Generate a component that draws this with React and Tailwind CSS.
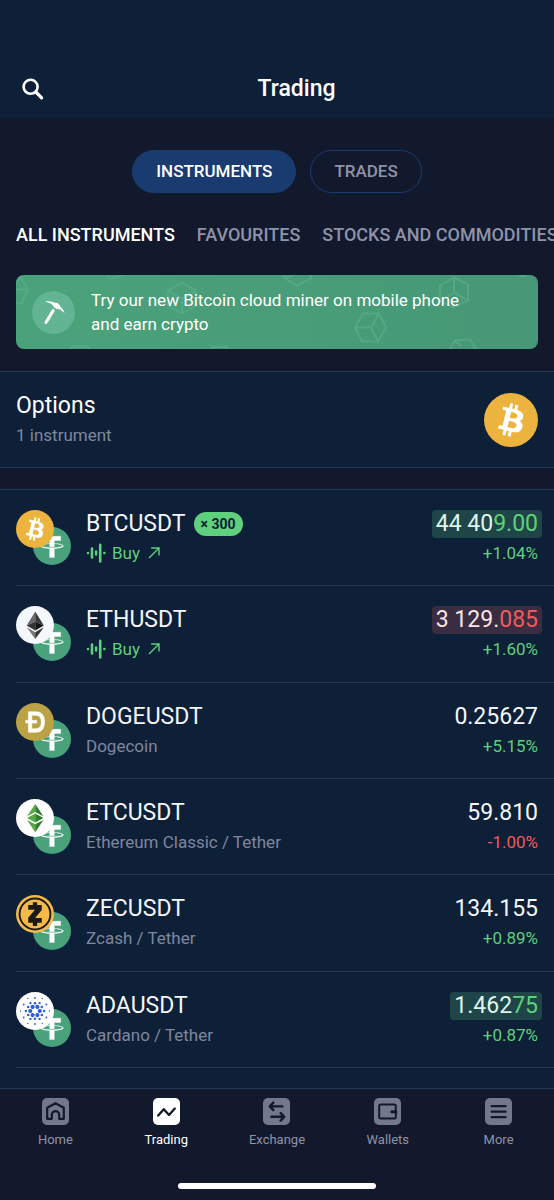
import React from "react";

const COLORS = { up: "text-[#5fd07c]", down: "text-[#ef5b5b]" };

function SearchIcon() {
  return (
    <svg viewBox="0 0 24 24" className="size-6" fill="none" stroke="currentColor" aria-hidden="true">
      <circle cx="9.6" cy="9.8" r="7" strokeWidth="2.6" />
      <path d="M14.8 15L20.6 20.8" strokeWidth="3.2" strokeLinecap="round" />
    </svg>
  );
}

function Btc({ className }) {
  return (
    <svg viewBox="0 0 32 32" className={className} aria-hidden="true">
      <circle cx="16" cy="16" r="16" fill="#ecb33e" />
      <path
        fill="#fff"
        d="M23.189 14.02c.314-2.096-1.283-3.223-3.465-3.975l.708-2.84-1.728-.43-.69 2.765c-.454-.114-.92-.22-1.385-.326l.695-2.783L15.596 6l-.708 2.839c-.376-.086-.746-.17-1.104-.26l.002-.009-2.384-.595-.46 1.846s1.283.294 1.256.312c.7.175.826.638.805 1.006l-.806 3.235c.048.012.11.03.18.057l-.183-.045-1.13 4.532c-.086.212-.303.531-.793.41.018.025-1.256-.313-1.256-.313l-.858 1.978 2.25.561c.418.105.828.215 1.231.318l-.715 2.872 1.727.43.708-2.84c.472.127.93.245 1.378.357l-.706 2.828 1.728.43.715-2.866c2.948.558 5.164.333 6.097-2.333.752-2.146-.037-3.385-1.588-4.192 1.13-.26 1.98-1.003 2.207-2.538zm-3.95 5.538c-.533 2.147-4.148.986-5.32.695l.95-3.805c1.172.293 4.929.872 4.37 3.11zm.535-5.569c-.487 1.953-3.495.96-4.47.717l.86-3.45c.975.243 4.118.696 3.61 2.733z"
      />
    </svg>
  );
}

function Eth({ className }) {
  return (
    <svg viewBox="0 0 32 32" className={className} aria-hidden="true">
      <circle cx="16" cy="16" r="16" fill="#f4f7fc" />
      <path fill="#6a6a6a" d="M16.2 4.6L9 16.5l7.2-3.2z" />
      <path fill="#3a3a3a" d="M16.2 4.6v8.700l7.200 3.200z" />
      <path fill="#333" d="M9 16.5l7.2 4.2v-7.4z" />
      <path fill="#141414" d="M23.4 16.5l-7.2 4.2v-7.4z" />
      <path fill="#777" d="M9 17.9l7.2 4.2v5.6z" />
      <path fill="#333" d="M23.4 17.9l-7.2 4.2v5.6z" />
    </svg>
  );
}

function Doge({ className }) {
  return (
    <svg viewBox="0 0 32 32" className={className} aria-hidden="true">
      <circle cx="16" cy="16" r="16" fill="#bba245" />
      <path
        fill="#fff"
        stroke="#fff"
        strokeWidth="0.5"
        d="M13.248 14.61h4.314v2.286h-4.314v4.818h2.721c1.077 0 1.958-.145 2.644-.437.686-.291 1.224-.694 1.615-1.21a4.4 4.4 0 00.796-1.815 11.4 11.4 0 00.22-2.252c0-.722-.073-1.474-.22-2.253a4.4 4.4 0 00-.796-1.815c-.391-.517-.929-.92-1.615-1.21-.686-.292-1.567-.438-2.644-.438h-2.721v4.325zm-2.766 2.286H8.2v-2.285h2.282V7.4h6.549c1.21 0 2.257.21 3.142.627.885.419 1.607.99 2.168 1.715.56.724.977 1.572 1.25 2.543.273.971.409 2.61.409 3.715a11.47 11.47 0 01-.41 3.415c-.272.97-.689 1.919-1.25 2.743-.56.725-1.282 1.396-2.168 1.815-.884.418-1.931.627-3.142.627h-6.549v-7.704z"
      />
    </svg>
  );
}

function Etc({ className }) {
  return (
    <svg viewBox="0 0 32 32" className={className} aria-hidden="true">
      <circle cx="16" cy="16" r="16" fill="#fff" />
      <path fill="#55a845" d="M16.2 4.2L9.3 14.6l6.9-3.6z" />
      <path fill="#2f7d32" d="M16.2 4.2v6.8l6.9 3.6z" />
      <path fill="#55a845" d="M9.3 16l6.9-3.7v7.5z" />
      <path fill="#2f7d32" d="M23.1 16l-6.9-3.7v7.5z" />
      <path fill="#55a845" d="M9.3 17.6l6.9 3.7v6.6z" />
      <path fill="#2f7d32" d="M23.1 17.6l-6.9 3.7v6.6z" />
    </svg>
  );
}

function Zec({ className }) {
  return (
    <svg viewBox="0 0 32 32" className={className} aria-hidden="true">
      <circle cx="16" cy="16" r="16" fill="#f4bb4b" />
      <circle cx="16" cy="16" r="13" fill="none" stroke="#1c1a17" strokeWidth="1.6" />
      <path fill="#1c1a17" d="M14.2 6h3.6v2.500h3.900v4.200l-5.600 6.700h5.600v4h-3.900V26h-3.600v-2.600h-3.900v-4.200l5.600-6.700h-5.600v-4h3.900z" />
    </svg>
  );
}

const ring = (n, r, size, offset) =>
  Array.from({ length: n }, (_, i) => {
    const a = ((offset + (360 / n) * i) * Math.PI) / 180;
    return [16 + r * Math.cos(a), 16 + r * Math.sin(a), size];
  });

const ADA_DOTS = [
  ...ring(6, 4, 1.75, 0),
  ...ring(6, 6.6, 1.05, 30),
  ...ring(6, 7.7, 1, 0),
  ...ring(6, 11, 0.8, 30),
  ...ring(6, 12.2, 0.6, 0),
];

function Ada({ className }) {
  return (
    <svg viewBox="0 0 32 32" className={className} aria-hidden="true">
      <circle cx="16" cy="16" r="16" fill="#fff" />
      {ADA_DOTS.map(([cx, cy, r], i) => (
        <circle key={i} cx={cx} cy={cy} r={r} fill="#2a5fdc" />
      ))}
    </svg>
  );
}

function Usdt({ className }) {
  return (
    <svg viewBox="0 0 32 32" className={className} aria-hidden="true">
      <circle cx="16" cy="16" r="16" fill="#4aa27c" />
      <path
        fill="#fff"
        stroke="#fff"
        strokeWidth="0.3"
        d="M17.922 17.383v-.002c-.11.008-.677.042-1.942.042-1.01 0-1.721-.03-1.971-.042v.003c-3.888-.171-6.79-.848-6.79-1.658 0-.809 2.902-1.486 6.79-1.66v2.644c.254.018.982.061 1.988.061 1.207 0 1.812-.05 1.925-.06v-2.643c3.88.173 6.775.85 6.775 1.658 0 .81-2.895 1.485-6.775 1.657m0-3.59v-2.366h5.414V7.819H8.595v3.608h5.414v2.365c-4.4.202-7.709 1.074-7.709 2.118 0 1.044 3.309 1.915 7.709 2.118v7.582h3.913v-7.584c4.393-.202 7.694-1.073 7.694-2.116 0-1.043-3.301-1.914-7.694-2.117"
      />
    </svg>
  );
}

function BannerPattern() {
  return (
    <svg
      className="absolute inset-0 size-full"
      viewBox="0 0 522 75"
      preserveAspectRatio="xMidYMid slice"
      fill="none"
      stroke="#5cb08d"
      strokeOpacity="0.6"
      strokeWidth="2"
      aria-hidden="true"
    >
      <path d="M-4 15H11M4 2L12 15L5 29H-4M-4 15L4 2" />
      <path d="M88 -4L94 4L110 0" />
      <path d="M166 8L152 16V31L166 39L180 31V16ZM166 24L152 16M166 24L180 16M166 24V39" />
      <path d="M54 76L56 72H72L74 76M193 76L196 73L210 72L212 76" />
      <path d="M267 -2L269 4L281 11L295 4V-2M281 -1L269 4" />
      <path d="M339 53L347 39H363L370 53L362 67H346ZM339 53H355M355 53L363 39M355 53L362 67" />
      <path d="M438 3L424 11V26L437 33L452 26V10ZM438 18V3M438 18L424 26M438 18L452 26" />
      <path d="M433 76L439 66L454 65L461 76M439 66L446 72" />
      <path d="M496 -2L508 2L514 -2" />
    </svg>
  );
}

function Pickaxe() {
  return (
    <svg viewBox="0 0 43 43" className="size-[43px] shrink-0" aria-hidden="true">
      <circle cx="21.5" cy="21.5" r="21.5" fill="#62b493" />
      <path
        fill="#fff"
        d="M13 10.600c3.500-.9 7.600-.2 10.600 1.500l1.300-.4 3 2.200v1.400c2.400 1.900 4.200 4.200 4.600 6.800-1.900-2.200-4.200-3.400-6.600-4.400l-1.300.4-3.300-2.400-.1-1.300c-2.500-1.800-5-3-8.200-3.800z"
      />
      <path d="M21.2 19.6L14 31.4" stroke="#fff" strokeWidth="3" strokeLinecap="round" />
    </svg>
  );
}

function SignalIcon() {
  return (
    <svg viewBox="0 0 20 20" className="size-5" fill="none" stroke="currentColor" strokeLinecap="round" aria-hidden="true">
      <path d="M2 10h.01M18.4 10h.01" strokeWidth="2.6" />
      <path d="M6 5.5v9M14.2 1.8v16.6" strokeWidth="2.6" />
      <path d="M10.1 8.400v3.200" strokeWidth="2.4" />
    </svg>
  );
}

function ArrowIcon() {
  return (
    <svg viewBox="0 0 12 12" className="size-3" fill="none" stroke="currentColor" strokeWidth="1.400" aria-hidden="true">
      <path d="M1 11L11 1M3.2 1H11V8.5" />
    </svg>
  );
}

const ROWS = [
  { symbol: "BTCUSDT", Coin: Btc, badge: "× 300", signal: true, head: "44 40", tail: "9.00", flash: "up", change: "+1.04%", dir: "up" },
  { symbol: "ETHUSDT", Coin: Eth, signal: true, head: "3 129.", tail: "085", flash: "down", change: "+1.60%", dir: "up" },
  { symbol: "DOGEUSDT", Coin: Doge, name: "Dogecoin", head: "0.25627", change: "+5.15%", dir: "up" },
  { symbol: "ETCUSDT", Coin: Etc, name: "Ethereum Classic / Tether", head: "59.810", change: "-1.00%", dir: "down" },
  { symbol: "ZECUSDT", Coin: Zec, name: "Zcash / Tether", head: "134.155", change: "+0.89%", dir: "up" },
  { symbol: "ADAUSDT", Coin: Ada, name: "Cardano / Tether", head: "1.462", tail: "75", flash: "up", change: "+0.87%", dir: "up" },
];

const FLASH = {
  up: "bg-[#1f4549] text-[#dff5ea]",
  down: "bg-[#3a2c41] text-[#fbe3e3]",
};

function Row({ symbol, Coin, badge, signal, name, head, tail, flash, change, dir }) {
  return (
    <li className="ml-4 flex flex-1 border-b border-[#26364f] pr-4">
      <div className="relative mt-5 size-[55px] shrink-0">
        <Usdt className="absolute right-0 bottom-0 size-[38px]" />
        <Coin className="absolute top-0 left-0 size-[38px]" />
      </div>
      <div className="ml-[15px] flex flex-1 flex-col pt-5">
        <div className="flex h-7 items-center gap-2">
          <span className="text-[23px] leading-7 text-[#f3f6fa]">{symbol}</span>
          {badge && <span className="rounded-full bg-[#5fd07c] px-[7px] text-sm leading-6 font-bold text-[#0e1f38]">{badge}</span>}
        </div>
        {signal ? (
          <a href="#buy" className="mt-px flex h-7 items-center text-[17px] leading-7 text-[#5fd07c]">
            <SignalIcon />
            <span className="mr-2 ml-1.5">Buy</span>
            <ArrowIcon />
          </a>
        ) : (
          <span className="mt-px text-[17px] leading-7 text-[#7f879d]">{name}</span>
        )}
      </div>
      <div className="flex flex-col items-end pt-5">
        <span className={`-mr-1 rounded px-1 text-[23px] leading-7 ${flash ? FLASH[flash] : "text-[#f3f6fa]"}`}>
          {head}
          {tail && <span className={COLORS[flash]}>{tail}</span>}
        </span>
        <span className={`mt-px text-[17px] leading-7 ${COLORS[dir]}`}>{change}</span>
      </div>
    </li>
  );
}

const NAV = [
  {
    label: "Home",
    icon: <path d="M5.2 20.8V9.8L13.5 5.2L21.8 9.8V20.8H17.2V16.8a3.7 3.7 0 0 0-7.4 0V20.8Z" strokeWidth="2.2" strokeLinejoin="round" />,
  },
  {
    label: "Trading",
    active: true,
    icon: <path d="M5.2 17.6L10.8 11.200L16 17L21.8 10.6" strokeWidth="2.3" strokeLinecap="round" strokeLinejoin="round" />,
  },
  {
    label: "Exchange",
    icon: (
      <path
        d="M19.4 8.400H7.400M10.400 4.600L6.800 8.400L10.400 12.200M8.400 18.800H20.400M17.600 15L21.200 18.800L17.600 22.600"
        strokeWidth="2.4"
        strokeLinecap="round"
        strokeLinejoin="round"
      />
    ),
  },
  {
    label: "Wallets",
    icon: (
      <>
        <rect x="5.2" y="6.6" width="16.6" height="14" rx="1.5" strokeWidth="2" />
        <path d="M17.8 13.7H21.8" strokeWidth="3" strokeLinecap="round" />
      </>
    ),
  },
  { label: "More", icon: <path d="M6.6 8.2H20.6M6.6 13.7H20.6M6.6 19.2H20.6" strokeWidth="2.2" strokeLinecap="round" /> },
];

export default function App() {
  return (
    <div className="flex min-h-screen flex-col overflow-x-hidden bg-[#12192c] font-[Roboto,sans-serif] text-white">
      <header className="flex items-center bg-[#0e1f38] pt-[75px] pr-1.5 pb-[15px] pl-[21px]">
        <button type="button" aria-label="Search">
          <SearchIcon />
        </button>
        <h1 className="flex-1 text-center text-[23px] leading-7 font-medium">Trading</h1>
      </header>

      <main className="flex flex-1 flex-col">
        <div className="flex justify-center gap-[14px] pt-8 text-[17px] font-medium">
          <button type="button" className="h-[43px] rounded-full border border-[#1a3b70] bg-[#1a3b70] px-[23px]">
            INSTRUMENTS
          </button>
          <button type="button" className="h-[43px] rounded-full border border-[#1a3b70] px-[23px] text-[#8f93a8]">
            TRADES
          </button>
        </div>

        <div className="mt-[30px] flex gap-[22px] overflow-hidden pl-4 text-lg leading-6 font-medium whitespace-nowrap text-[#8f93a8]">
          <button type="button" className="text-white">
            ALL INSTRUMENTS
          </button>
          <button type="button">FAVOURITES</button>
          <button type="button">STOCKS AND COMMODITIES</button>
        </div>

        <a
          href="#miner"
          className="relative mx-4 mt-7 flex items-center gap-4 overflow-hidden rounded-lg bg-linear-to-r from-[#4aa27a] to-[#479876] px-4 py-[13px]"
        >
          <BannerPattern />
          <span className="relative flex">
            <Pickaxe />
          </span>
          <span className="relative max-w-[400px] text-[17px] leading-6">Try our new Bitcoin cloud miner on mobile phone and earn crypto</span>
        </a>

        <section className="mt-[22px] flex items-center justify-between border-y border-[#26364f] bg-[#0e1f38] px-4 py-5">
          <div>
            <h2 className="text-[23px] leading-7">Options</h2>
            <p className="mt-[3px] text-[17px] leading-6 text-[#7f879d]">1 instrument</p>
          </div>
          <Btc className="size-[54px]" />
        </section>

        <ul className="mt-[21px] flex flex-1 flex-col border-t border-[#26364f] bg-[#0e1f38] pb-5">
          {ROWS.map((row) => (
            <Row key={row.symbol} {...row} />
          ))}
        </ul>
      </main>

      <nav className="border-t border-[#22395e] pt-[9px] pb-[11px]">
        <div className="grid grid-cols-5">
          {NAV.map(({ label, active, icon }) => (
            <a
              key={label}
              href={`#${label.toLowerCase()}`}
              className={`flex flex-col items-center gap-[5px] text-[13px] leading-5 ${active ? "text-white" : "text-[#8f93a8]"}`}
            >
              <svg viewBox="0 0 27 27" className="size-[27px]" fill="none" stroke="#12192c" aria-hidden="true">
                <rect width="27" height="27" rx="5" fill={active ? "#fff" : "#73798a"} stroke="none" />
                {icon}
              </svg>
              {label}
            </a>
          ))}
        </div>
        <div className="mx-auto mt-[33px] h-1.5 w-[198px] rounded-full bg-white" />
      </nav>
    </div>
  );
}
